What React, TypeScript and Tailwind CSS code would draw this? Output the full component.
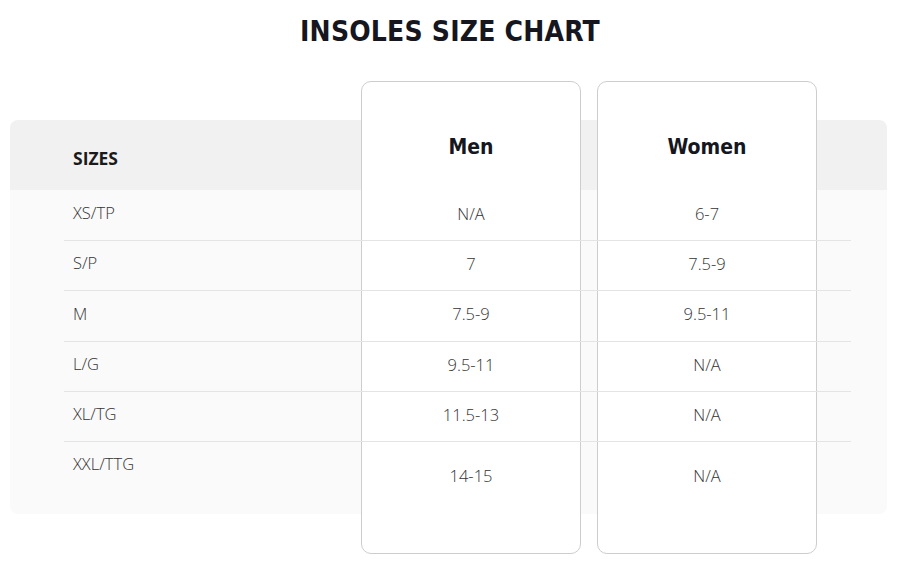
const rows = [
  { size: 'XS/TP', men: 'N/A', women: '6-7', h: 'h-[50px]' },
  { size: 'S/P', men: '7', women: '7.5-9', h: 'h-[50px]' },
  { size: 'M', men: '7.5-9', women: '9.5-11', h: 'h-[51px]' },
  { size: 'L/G', men: '9.5-11', women: 'N/A', h: 'h-[50px]' },
  { size: 'XL/TG', men: '11.5-13', women: 'N/A', h: 'h-[50px]' },
  { size: 'XXL/TTG', men: '14-15', women: 'N/A', h: 'h-[72px]' },
];

const display = { fontFamily: '"DejaVu Sans Condensed", "DejaVu Sans", sans-serif' };
const body = { fontFamily: '"Open Sans", "Liberation Sans", sans-serif' };

export default function App() {
  return (
    <div className="w-[900px] h-[570px] bg-white overflow-hidden">
      <h1
        className="text-center text-[28px] leading-[30px] font-bold text-[#16161e] pt-[17px] tracking-[0.2px]"
        style={display}
      >
        INSOLES SIZE CHART
      </h1>

      <div className="grid mt-[34px]">
        {/* grey table panel */}
        <div className="col-start-1 row-start-1 mt-[39px] ml-[10px] w-[877px] h-[394px] rounded-[8px] overflow-hidden flex flex-col">
          <div className="h-[70px] bg-[#f1f1f1]" />
          <div className="flex-1 bg-[#fafafa]" />
        </div>

        {/* gender cards */}
        <div className="col-start-1 row-start-1 flex gap-[16px] pl-[361px]">
          {['Men', 'Women'].map((g) => (
            <div
              key={g}
              className="w-[220px] h-[473px] bg-white border border-[#cdcdcd] rounded-[10px] flex justify-center pt-[52px]"
            >
              <span className="text-[21px] leading-[26px] font-bold text-[#16161e]" style={display}>
                {g}
              </span>
            </div>
          ))}
        </div>

        {/* table text and rules */}
        <div className="col-start-1 row-start-1 mt-[39px] ml-[64px] w-[787px] flex flex-col" style={body}>
          <div className="h-[71px] flex items-center pl-[9px] pt-[5px]">
            <span className="text-[17.5px] font-bold text-[#1a1a1a]">SIZES</span>
          </div>
          {rows.map((r, i) => {
            const last = i === rows.length - 1;
            return (
              <div
                key={r.size}
                className={
                  'grid grid-cols-[297px_220px_16px_220px_34px] text-[16.5px] font-light text-[#333] ' +
                  r.h +
                  (last ? '' : ' border-b border-[#e4e4e4]')
                }
              >
                <div className={last ? 'pl-[9px] pt-[10px]' : 'pl-[9px] flex items-center pb-[4px]'}>{r.size}</div>
                <div className="flex items-center justify-center pb-[3px]">{r.men}</div>
                <div />
                <div className="flex items-center justify-center pb-[3px]">{r.women}</div>
                <div />
              </div>
            );
          })}
        </div>
      </div>
    </div>
  );
}
